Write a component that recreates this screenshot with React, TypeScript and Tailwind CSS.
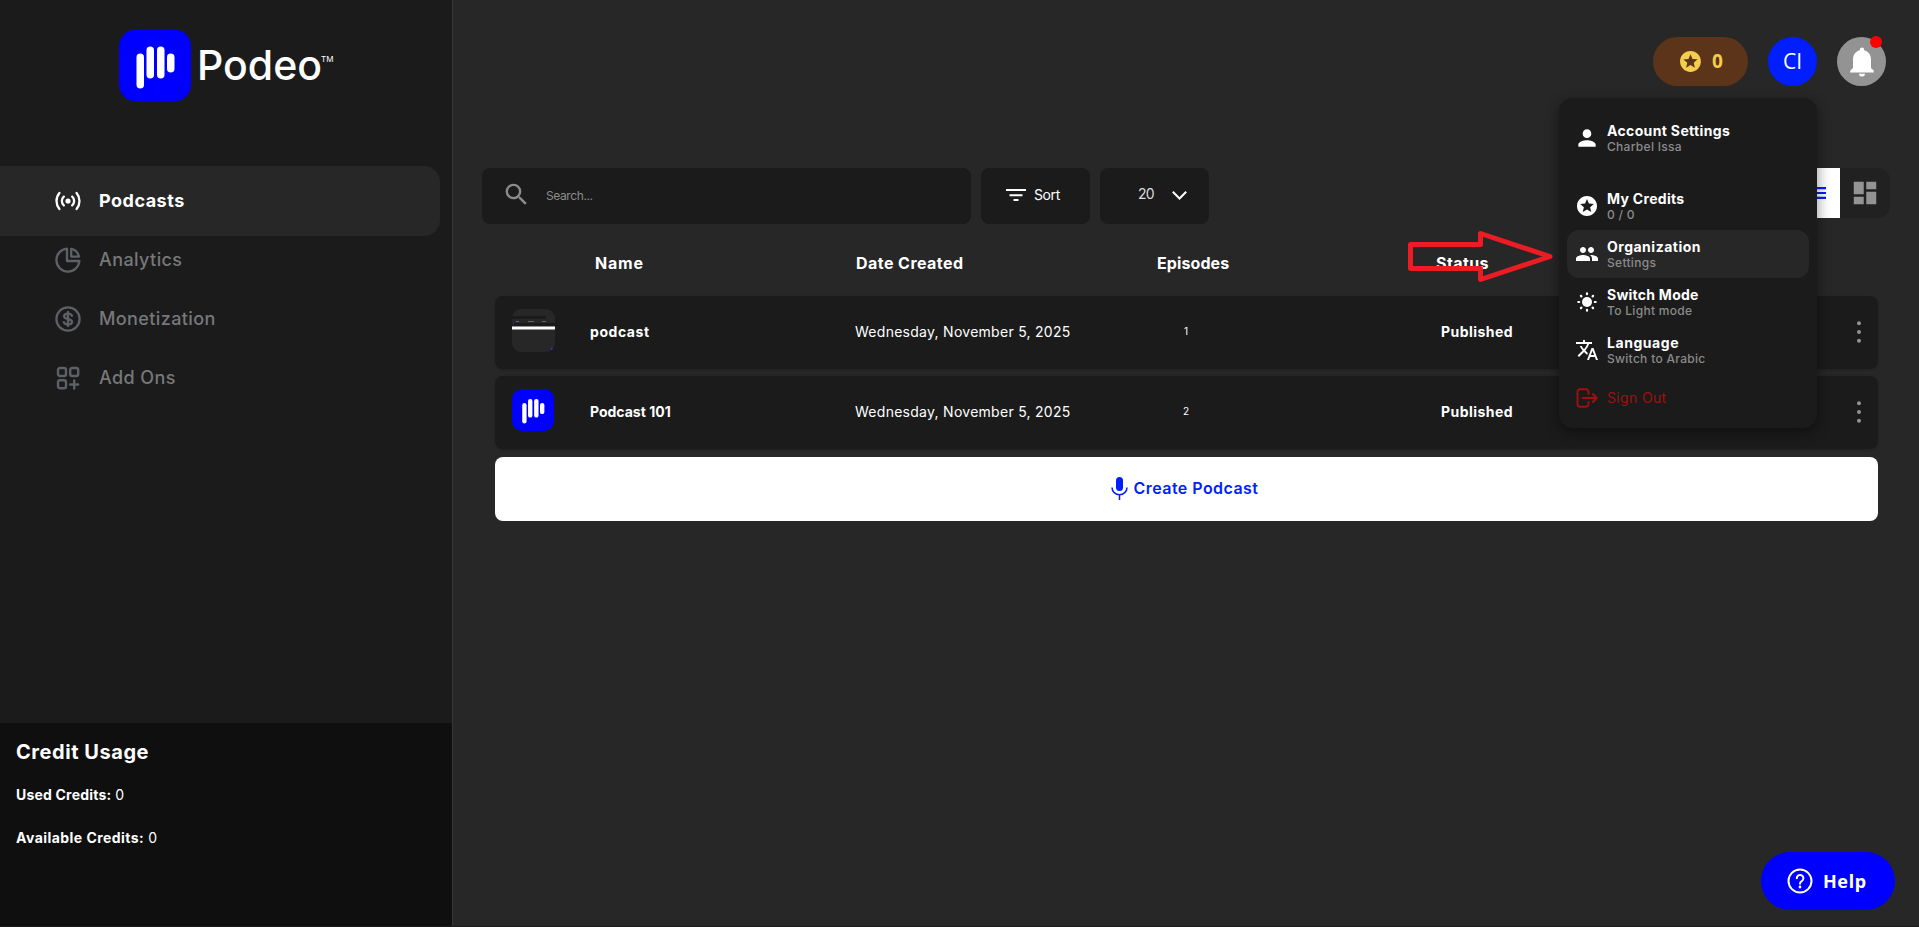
import React from 'react';
import { MdDashboard, MdPeople, MdPerson, MdSearch, MdStars, MdTranslate } from 'react-icons/md';

interface Podcast {
  name: string;
  nameClass: string;
  date: string;
  episodes: number;
  status: string;
  cover: React.ReactNode;
}

const LogoMark: React.FC<{ className: string }> = ({ className }) => (
  <svg viewBox="0 0 72 72" className={className}>
    <rect width="72" height="72" rx="17" fill="#0000ff" />
    <g fill="#fff">
      <rect x="17.5" y="24" width="7.5" height="35" rx="3.75" />
      <rect x="27.5" y="17" width="7.5" height="32" rx="3.75" />
      <rect x="38" y="17" width="7.5" height="32" rx="3.75" />
      <rect x="48" y="24" width="7.5" height="19" rx="3.75" />
    </g>
  </svg>
);

const ScreenCover = () => (
  <svg viewBox="0 0 43 43" className="w-[43px] h-[43px] rounded-[9px]">
    <rect width="43" height="43" fill="#272727" />
    <rect y="7" width="34" height="3" fill="#1b1b1b" />
    <rect y="14" width="43" height="3" fill="#1b1b1b" />
    <rect x="4" y="12" width="3" height="1" fill="#666" />
    <rect x="16" y="12" width="6" height="1" fill="#666" />
    <rect x="30" y="12" width="4" height="1" fill="#666" />
    <rect x="1" y="14" width="1" height="2" fill="#2222cc" />
    <rect y="17.5" width="43" height="3" fill="#fff" />
    <rect x="39" y="39" width="2" height="2" fill="#3b2fd0" />
  </svg>
);

const BroadcastIcon = () => (
  <svg viewBox="0 0 26 26" className="w-[26px] h-[26px]" fill="none" stroke="currentColor" strokeWidth="2.3" strokeLinecap="round">
    <circle cx="13" cy="13" r="2.6" fill="currentColor" stroke="none" />
    <path d="M8.8 8.6a6 6 0 0 0 0 8.8M17.2 8.6a6 6 0 0 1 0 8.8M4.4 5a12.5 12.5 0 0 0 0 16M21.6 5a12.5 12.5 0 0 1 0 16" />
  </svg>
);

const PieIcon = () => (
  <svg viewBox="0 0 26 26" className="w-[26px] h-[26px]" fill="none" stroke="currentColor" strokeWidth="2.3" strokeLinejoin="round">
    <path d="M12 1.6A11.5 11.5 0 1 0 24.4 14H12z" />
    <path d="M16.2 1.8v7.8h7.8a10.4 10.4 0 0 0-7.8-7.8z" />
  </svg>
);

const DollarIcon = () => (
  <svg viewBox="0 0 26 26" className="w-[26px] h-[26px]" fill="none" stroke="currentColor" strokeWidth="2.3" strokeLinecap="round">
    <circle cx="13" cy="13" r="11.6" />
    <path d="M17 9.8c-.6-1.5-2-2.2-4-2.2-2.3 0-3.9 1-3.9 2.7 0 3.8 7.9 1.7 7.9 5.4 0 1.7-1.6 2.7-4 2.7-2.2 0-3.7-.8-4.2-2.3M13 6v14" />
  </svg>
);

const AddOnsIcon = () => (
  <svg viewBox="0 0 26 26" className="w-[26px] h-[26px]" fill="none" stroke="currentColor" strokeWidth="2.4" strokeLinecap="round">
    <rect x="3" y="3" width="8" height="8" rx="2" />
    <rect x="15.2" y="3" width="8" height="8" rx="2" />
    <rect x="3" y="15.3" width="8" height="8" rx="2" />
    <path d="M19.2 15.5v8M15.2 19.5h8" />
  </svg>
);

const BellIcon = () => (
  <svg viewBox="0 0 24 30" className="w-6 h-[30px]" fill="#fff">
    <path d="M12 .5a2.2 2.2 0 0 0-2.2 2.2v.6C5.6 4.3 3 8 3 12.5V21L.2 23.8V25.5h23.6v-1.7L21 21v-8.5c0-4.5-2.6-8.2-6.8-9.2v-.6A2.2 2.2 0 0 0 12 .5z" />
    <path d="M9 26.8h6a3 2.8 0 0 1-6 0z" />
  </svg>
);

const SunIcon = () => (
  <svg viewBox="0 0 20 20" className="w-5 h-5" fill="currentColor" stroke="currentColor" strokeWidth="2.2" strokeLinecap="round">
    <circle cx="10" cy="10" r="5" stroke="none" />
    <path d="M10 1.3v.9M10 17.8v.9M1.3 10h.9M17.8 10h.9M3.9 3.9l.5.5M15.6 15.6l.5.5M16.1 3.9l-.5.5M4.4 15.6l-.5.5" />
  </svg>
);

const SignOutIcon = () => (
  <svg viewBox="0 0 22 20" className="w-[22px] h-5" fill="none" stroke="currentColor" strokeWidth="1.9" strokeLinecap="round" strokeLinejoin="round">
    <path d="M12.5 6V4a2.8 2.8 0 0 0-2.8-2.8H4.3A2.8 2.8 0 0 0 1.5 4v12a2.8 2.8 0 0 0 2.8 2.8h5.4a2.8 2.8 0 0 0 2.8-2.8v-2M6.5 10h14M16.8 6l4 4-4 4" />
  </svg>
);

const MicIcon = () => (
  <svg viewBox="0 0 17 23" className="w-[17px] h-[23px]" fill="none" stroke="currentColor" strokeWidth="1.5">
    <rect x="5" y="0" width="7" height="14" rx="3.5" fill="currentColor" stroke="none" />
    <path d="M1 10.5a7.5 7.2 0 0 0 15 0M8.5 17.7V23" />
  </svg>
);

const navItems = [
  { label: 'Analytics', icon: <PieIcon /> },
  { label: 'Monetization', icon: <DollarIcon /> },
  { label: 'Add Ons', icon: <AddOnsIcon /> },
];

const podcasts: Podcast[] = [
  {
    name: 'podcast',
    nameClass: 'tracking-[0.55px]',
    date: 'Wednesday, November 5, 2025',
    episodes: 1,
    status: 'Published',
    cover: <ScreenCover />,
  },
  {
    name: 'Podcast 101',
    nameClass: 'tracking-normal',
    date: 'Wednesday, November 5, 2025',
    episodes: 2,
    status: 'Published',
    cover: <LogoMark className="w-[42px] h-[42px]" />,
  },
];

const menuItems = [
  { title: 'Account Settings', sub: 'Charbel Issa', icon: <MdPerson className="w-[26px] h-[26px] -mt-0.5" />, box: 'mb-[19px] pb-px', spacing: 'tracking-[0.35px]' },
  { title: 'My Credits', sub: '0 / 0', icon: <MdStars className="w-6 h-6" />, box: '', spacing: 'tracking-[0.3px]' },
  { title: 'Organization', sub: 'Settings', icon: <MdPeople className="w-6 h-6" />, box: 'bg-[#272727]', spacing: 'tracking-[0.5px]' },
  { title: 'Switch Mode', sub: 'To Light mode', icon: <SunIcon />, box: '', spacing: 'tracking-[0.25px]' },
  { title: 'Language', sub: 'Switch to Arabic', icon: <MdTranslate className="w-6 h-6" />, box: '', spacing: 'tracking-[0.55px]' },
];

const Sidebar = () => (
  <aside className="w-[453px] shrink-0 flex flex-col bg-[#1b1b1b] border-r border-[#363636]">
    <div className="flex items-start pl-[119px] pt-[29px] h-[166px]">
      <LogoMark className="w-[72px] h-[73px]" />
      <span className="ml-[6px] mt-[11px] text-[41px] leading-[50px] font-medium">Podeo</span>
      <span className="-ml-px mt-[25px] text-[8px] leading-[10px]">TM</span>
    </div>

    <nav className="flex flex-col text-lg leading-6">
      <div className="w-[440px] h-[70px] flex items-center gap-[18px] pl-[55px] rounded-r-2xl bg-[#272727] font-bold">
        <BroadcastIcon />
        <span className="tracking-[0.5px]">Podcasts</span>
      </div>
      {navItems.map((item) => (
        <div key={item.label} className="h-12 mb-[11px] flex items-center gap-[18px] pl-[55px] pb-px font-medium text-[#5d6065]">
          {item.icon}
          <span className="text-[#77787a] tracking-[0.4px]">{item.label}</span>
        </div>
      ))}
    </nav>

    <div className="mt-auto h-[203px] bg-[#0f0f0f] px-4 pt-[17px]">
      <h2 className="text-xl leading-6 font-bold tracking-[0.55px]">Credit Usage</h2>
      <p className="mt-[21px] text-sm leading-5"><b className="tracking-[0.2px]">Used Credits:</b> 0</p>
      <p className="mt-[23px] text-sm leading-5"><b className="tracking-[0.45px]">Available Credits:</b> 0</p>
    </div>
  </aside>
);

const AccountMenu = () => (
  <div className="absolute z-10 right-[102px] top-[98px] w-[258px] h-[330px] px-2 pt-[17px] rounded-[14px] bg-[#1b1b1b] shadow-[0_4px_14px_rgba(0,0,0,0.45)]">
    {menuItems.map((item) => (
      <div key={item.title} className={`h-12 flex items-center rounded-xl ${item.box}`}>
        <span className="w-10 flex justify-center">{item.icon}</span>
        <span className="flex flex-col">
          <span className={`text-sm leading-[17px] font-bold ${item.spacing}`}>{item.title}</span>
          <span className="text-xs leading-4 font-medium text-[#8b8b8b] tracking-[0.3px]">{item.sub}</span>
        </span>
      </div>
    ))}
    <div className="h-12 flex items-center text-[#a01010]">
      <span className="w-10 flex justify-center"><SignOutIcon /></span>
      <span className="text-sm tracking-[0.35px]">Sign Out</span>
    </div>
  </div>
);

const App: React.FC = () => {
  return (
    <div className="relative flex h-[927px] pb-px overflow-hidden bg-[#1b1b1b] text-white font-['Inter',sans-serif]">
      <Sidebar />

      <main className="flex-1 min-w-0 bg-[#272727]">
        <header className="h-[168px] pt-[37px] pr-[33px] flex justify-end gap-5">
          <div className="w-[95px] h-[49px] rounded-full bg-[#5c341a] text-[#f5cd4e] flex items-center justify-center gap-[9px] pb-px">
            <MdStars className="w-[25px] h-[25px]" />
            <span className="font-['Open_Sans',sans-serif] text-[19px] font-bold">0</span>
          </div>
          <div className="w-[49px] h-[49px] rounded-full bg-[#001eff] flex items-center justify-center font-['Open_Sans',sans-serif] text-[21px]">CI</div>
          <div className="relative w-[49px] h-[49px] rounded-full bg-[#939393] flex items-center justify-center">
            <BellIcon />
            <span className="absolute right-1 -top-px w-3 h-3 rounded-full bg-[#ff0000]" />
          </div>
        </header>

        <div className="flex items-start h-14 pl-[29px] pr-[29px]">
          <div className="w-[489px] h-14 flex items-center pl-[20px] pb-px rounded-lg bg-[#1b1b1b] text-[#8b8b8b]">
            <MdSearch className="w-[29px] h-[29px] -mt-0.5" />
            <span className="ml-[15px] text-xs tracking-[-0.4px]">Search...</span>
          </div>
          <div className="ml-[10px] w-[109px] h-14 flex items-center pl-[25px] pb-0.5 rounded-lg bg-[#1b1b1b]">
            <svg viewBox="0 0 20 12" className="w-5 h-3" stroke="#fff" strokeWidth="2">
              <path d="M0 1h20M3.5 6.2h13M7.5 11h5" />
            </svg>
            <span className="ml-2 text-sm leading-5 tracking-[-0.4px]">Sort</span>
          </div>
          <div className="ml-[10px] w-[109px] h-14 flex items-center pl-[38px] pb-0.5 rounded-lg bg-[#1b1b1b]">
            <span className="text-sm leading-5 -mt-0.5 text-[#dcdcdc] tracking-[-0.9px]">20</span>
            <svg viewBox="0 0 15 9" className="ml-[18px] w-[15px] h-[9px]" fill="none" stroke="#fff" strokeWidth="2">
              <path d="M.8.8 7.5 7.5 14.2.8" />
            </svg>
          </div>
          <div className="ml-auto flex h-[50px] overflow-hidden rounded-xl bg-[#212121]">
            <div className="w-[50px] flex items-center justify-center bg-white text-[#001eff]">
              <svg viewBox="0 0 22 12" className="w-[22px] h-3" stroke="currentColor" strokeWidth="2.2">
                <path d="M0 1.1h22M0 6h22M0 10.9h22" />
              </svg>
            </div>
            <div className="w-[50px] flex items-center justify-center text-[#939393]">
              <MdDashboard className="w-[30px] h-[30px]" />
            </div>
          </div>
        </div>

        <section className="pl-[42px] pr-[41px]">
          <div className="h-[72px] flex items-center pt-1.5 text-base font-bold">
            <span className="ml-[100px] w-[261px] tracking-[0.8px]">Name</span>
            <span className="w-[301px] tracking-[0.45px]">Date Created</span>
            <span className="w-[279px] tracking-[0.1px]">Episodes</span>
            <span className="tracking-[0.4px]">Status</span>
          </div>

          <div className="flex flex-col gap-[7px]">
            {podcasts.map((p) => (
              <div key={p.name} className="h-[73px] flex items-center pb-0.5 rounded-lg bg-[#1b1b1b] shadow-sm text-sm">
                <span className="ml-[17px] -mt-[3px] w-[43px]">{p.cover}</span>
                <span className={`ml-[35px] w-[265px] font-bold ${p.nameClass}`}>{p.name}</span>
                <span className="w-[320px] tracking-[0.27px]">{p.date}</span>
                <span className="w-[22px] text-center text-[10px]">{p.episodes}</span>
                <span className="ml-[244px] font-bold tracking-[0.45px]">{p.status}</span>
                <svg viewBox="0 0 4 22" className="ml-auto mr-[17px] w-1 h-[22px]" fill="#939393">
                  <circle cx="2" cy="2.2" r="2" />
                  <circle cx="2" cy="11" r="2" />
                  <circle cx="2" cy="19.8" r="2" />
                </svg>
              </div>
            ))}
          </div>

          <button className="mt-2 w-full h-16 flex items-center justify-center gap-[6px] pr-1 pb-0.5 rounded-lg bg-white text-[#001eff] text-base font-semibold">
            <MicIcon />
            <span className="tracking-[0.45px]">Create Podcast</span>
          </button>
        </section>
      </main>

      <AccountMenu />

      {/* Pointer to the organization entry */}
      <svg viewBox="0 0 148 56" className="absolute z-20 left-[1407px] top-[229px] w-[148px] h-14" fill="none" stroke="#ec1c24" strokeWidth="5" strokeLinejoin="round">
        <path d="M3.5 15.5h70v-11L143 27.5 73.5 50.5v-11H3.5z" />
      </svg>

      <button className="absolute right-6 bottom-[17px] w-[134px] h-[58px] rounded-full bg-[#0000ff] flex items-center pl-[26px] font-['Noto_Sans',sans-serif] text-lg font-bold tracking-[0.6px]">
        <svg viewBox="0 0 26 26" className="w-[26px] h-[26px] mr-[10px]" fill="none" stroke="#fff" strokeWidth="2" strokeLinecap="round">
          <circle cx="13" cy="13" r="11.5" />
          <path d="M9.8 10.3a3.3 3.3 0 1 1 5 2.8c-1.2.7-1.8 1.3-1.8 2.7" />
          <circle cx="13" cy="19" r="1.4" fill="#fff" stroke="none" />
        </svg>
        Help
      </button>
    </div>
  );
};

export default App;
